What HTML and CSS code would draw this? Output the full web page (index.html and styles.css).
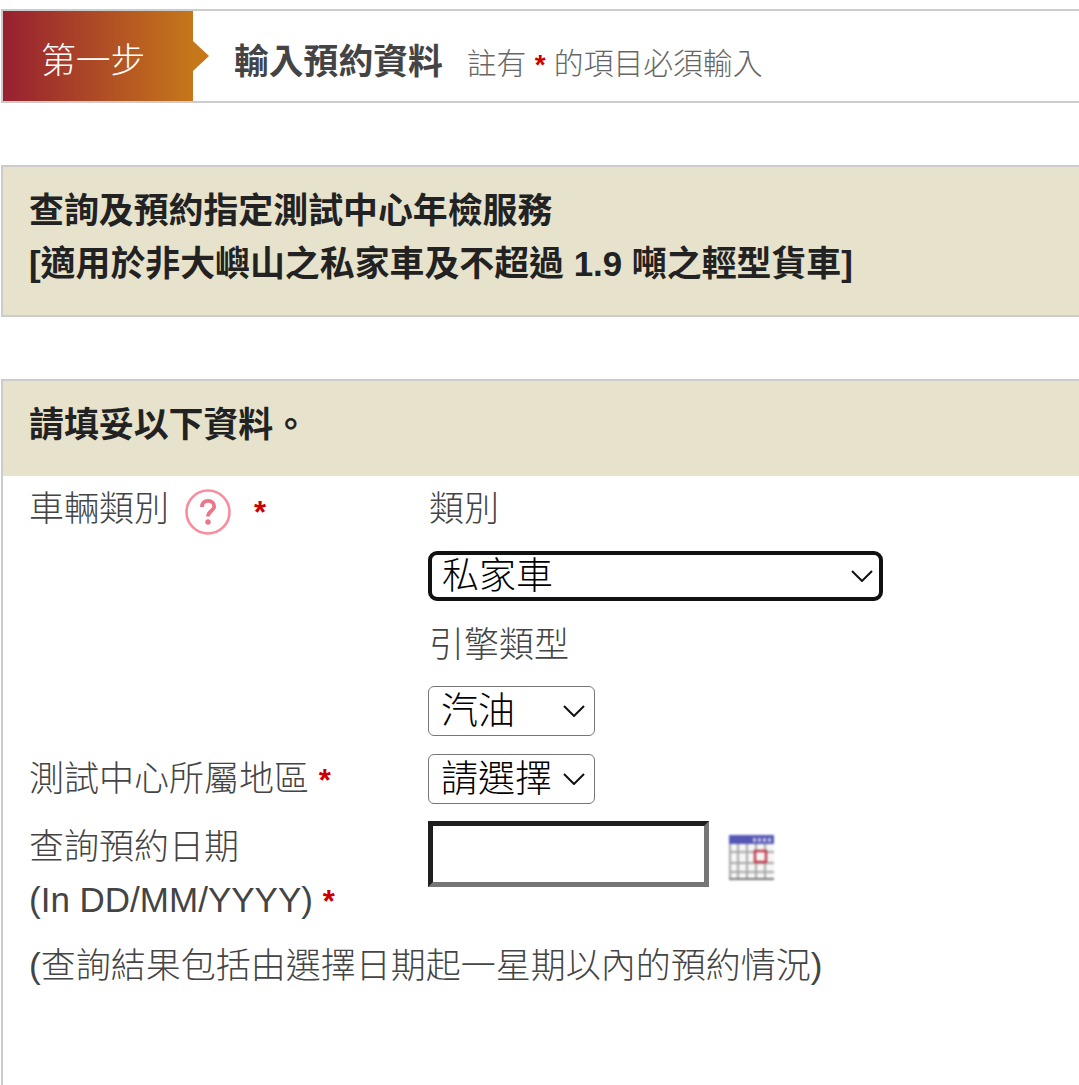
FILE: index.html
```html
<!DOCTYPE html>
<html lang="zh-Hant">
<head>
    <meta charset="utf-8">
    <title>預約年檢服務</title>
    <link rel="stylesheet" href="styles.css">
</head>
<body>
    <div class="step-bar">
        <div class="step-no">第一步</div>
        <div class="step-arrow"></div>
        <h1 class="step-title">輸入預約資料</h1>
        <p class="step-note">註有 <span class="req">*</span> 的項目必須輸入</p>
    </div>

    <div class="intro-box">
        <h2>查詢及預約指定測試中心年檢服務<br>[適用於非大嶼山之私家車及不超過 1.9 噸之輕型貨車]</h2>
    </div>

    <div class="form-box">
        <h2 class="form-head">請填妥以下資料。</h2>
        <div class="form-body">
            <div class="row row-first">
                <div class="label label-help">
                    <span>車輛類別</span>
                    <svg class="help-icon" viewBox="0 0 46 46" width="46" height="46">
                        <circle cx="23" cy="23" r="21.5" fill="#fff" stroke="#f98d9d" stroke-width="2.6"/>
                        <path d="M17 18c0-4 2.5-6.2 6-6.2s6.2 2.2 6.2 5.6c0 4.2-6.2 4.6-6.2 10.2" fill="none" stroke="#ee7487" stroke-width="3.8"/>
                        <circle cx="23" cy="33" r="2.7" fill="#ee7487"/>
                    </svg>
                    <span class="req req-help">*</span>
                </div>
                <div class="field">
                    <div class="field-label">類別</div>
                    <select class="pick pick-wide">
                        <option>私家車</option>
                    </select>
                    <div class="field-label field-label-2">引擎類型</div>
                    <select class="pick pick-small">
                        <option>汽油</option>
                    </select>
                </div>
            </div>
            <div class="row row-area">
                <div class="label">測試中心所屬地區 <span class="req">*</span></div>
                <div class="field">
                    <select class="pick pick-small">
                        <option>請選擇</option>
                    </select>
                </div>
            </div>
            <div class="row row-date">
                <div class="label">查詢預約日期<br>(In DD/MM/YYYY) <span class="req">*</span></div>
                <div class="field field-date">
                    <input class="date-input" type="text">
                    <svg class="cal-icon" viewBox="0 0 45 45" width="45" height="45">
                        <rect width="45" height="45" fill="#f6f6f6"/>
                        <rect width="45" height="9" fill="#5557b5"/>
                        <g fill="#c4c5e6">
                            <rect x="24" y="3" width="3" height="4"/>
                            <rect x="29" y="3" width="3" height="4"/>
                            <rect x="34" y="3" width="3" height="4"/>
                            <rect x="39" y="3" width="3" height="4"/>
                        </g>
                        <g fill="#a8a8a8">
                            <rect x="0" y="9" width="2" height="36"/>
                            <rect x="8" y="9" width="2" height="36"/>
                            <rect x="17" y="9" width="2" height="36"/>
                            <rect x="26" y="9" width="2" height="36"/>
                            <rect x="35" y="9" width="2" height="36"/>
                            <rect x="0" y="16" width="45" height="2"/>
                            <rect x="0" y="27" width="45" height="2"/>
                            <rect x="0" y="36" width="45" height="2"/>
                        </g>
                        <rect y="43" width="45" height="2" fill="#777"/>
                        <rect x="26" y="16" width="11" height="11" fill="#f4f4f4" stroke="#c0394a" stroke-width="2.4"/>
                    </svg>
                </div>
            </div>
            <p class="date-note">(查詢結果包括由選擇日期起一星期以內的預約情況)</p>
        </div>
    </div>
</body>
</html>
```

FILE: styles.css
```css
* {
    box-sizing: border-box;
    margin: 0;
    padding: 0;
}

html,
body {
    overflow: hidden;
}

body {
    height: 1085px;
    padding: 9px 0 0 1px;
    background-color: #fff;
    color: #333;
    font-family: "Liberation Sans", "Noto Sans CJK TC", sans-serif;
    font-size: 35px;
    line-height: 53px;
}

.req {
    color: #c00;
    font-size: 31px;
    font-weight: bold;
    line-height: 1;
}

/* step bar */
.step-bar {
    display: flex;
    align-items: center;
    height: 94px;
    border: 2px solid #ccc;
    border-right: none;
}

.step-no {
    width: 190px;
    height: 100%;
    padding-left: 38px;
    line-height: 100px;
    color: #fff;
    font-size: 34.8px;
    font-weight: 300;
    background: linear-gradient(to right, #972031, #c5771a);
}

.step-arrow {
    width: 0;
    height: 0;
    border-top: 15px solid transparent;
    border-bottom: 15px solid transparent;
    border-left: 16px solid #c5771a;
}

.step-title {
    margin: 10px 0 0 25px;
    color: #444;
    font-size: 34.8px;
    font-weight: bold;
}

.step-note {
    margin: 14px 0 0 24px;
    color: #666;
    font-size: 29.8px;
    font-weight: 300;
}

.step-note .req {
    font-size: 28px;
}

/* boxes */
.intro-box {
    margin-top: 62px;
    height: 152px;
    padding: 17px 0 0 26px;
    background-color: #e6e2cc;
    border: 2px solid #ccc;
    border-right: none;
}

.intro-box h2,
.form-head {
    color: #222;
    font-size: 34.9px;
    font-weight: bold;
}

.form-box {
    margin-top: 62px;
    height: 720px;
    border-top: 2px solid #ccc;
    border-left: 2px solid #ccc;
}

.form-head {
    height: 95px;
    padding: 17px 0 0 26px;
    background-color: #e6e2cc;
}

.form-body {
    padding: 6px 0 0 26px;
}

.row {
    display: grid;
    grid-template-columns: 399px 1fr;
}

.label {
    color: #444;
    font-weight: 300;
}

.label-help {
    display: flex;
    align-items: flex-start;
}

.help-icon {
    margin: 7px 0 0 16px;
}

.req-help {
    margin: 15px 0 0 23px;
}

/* fields */
.field-label {
    margin-left: 1px;
    color: #444;
    font-weight: 300;
}

.field-label-2 {
    margin-top: 17px;
    margin-bottom: 15px;
}

.pick {
    display: block;
    height: 50px;
    background-color: #fff;
    background-image: url("data:image/svg+xml,%3Csvg xmlns='http://www.w3.org/2000/svg' width='22' height='12'%3E%3Cpath d='M1 1l10 10L21 1' fill='none' stroke='%23111' stroke-width='2'/%3E%3C/svg%3E");
    background-repeat: no-repeat;
    color: #000;
    font-family: "Liberation Sans", "Noto Sans CJK TC", sans-serif;
    font-size: 37px;
    font-weight: 300;
    border: 1.5px solid #767676;
    border-radius: 6px;
    appearance: none;
}

.pick-wide {
    width: 455px;
    margin-top: 16px;
    padding-left: 10px;
    background-position: right 6px center;
    border: 4px solid #111;
    border-radius: 9px;
}

.pick-small {
    width: 167px;
    padding-left: 12px;
    background-position: right 9px center;
}

.row-area {
    margin-top: 18px;
}

.row-area .label {
    margin-top: -2px;
}

.row-date {
    margin-top: 16px;
}

.row-date .label {
    margin-top: -1px;
}

.date-input {
    width: 281px;
    height: 66px;
    background-color: #fff;
    border: 5px solid;
    border-color: #1f1f1f #767676 #767676 #1f1f1f;
}

.field-date {
    display: flex;
    align-items: flex-start;
}

.cal-icon {
    margin: 14px 0 0 20px;
    filter: blur(0.8px);
}

.date-note {
    margin-top: 13px;
    color: #444;
    font-weight: 300;
}
```
